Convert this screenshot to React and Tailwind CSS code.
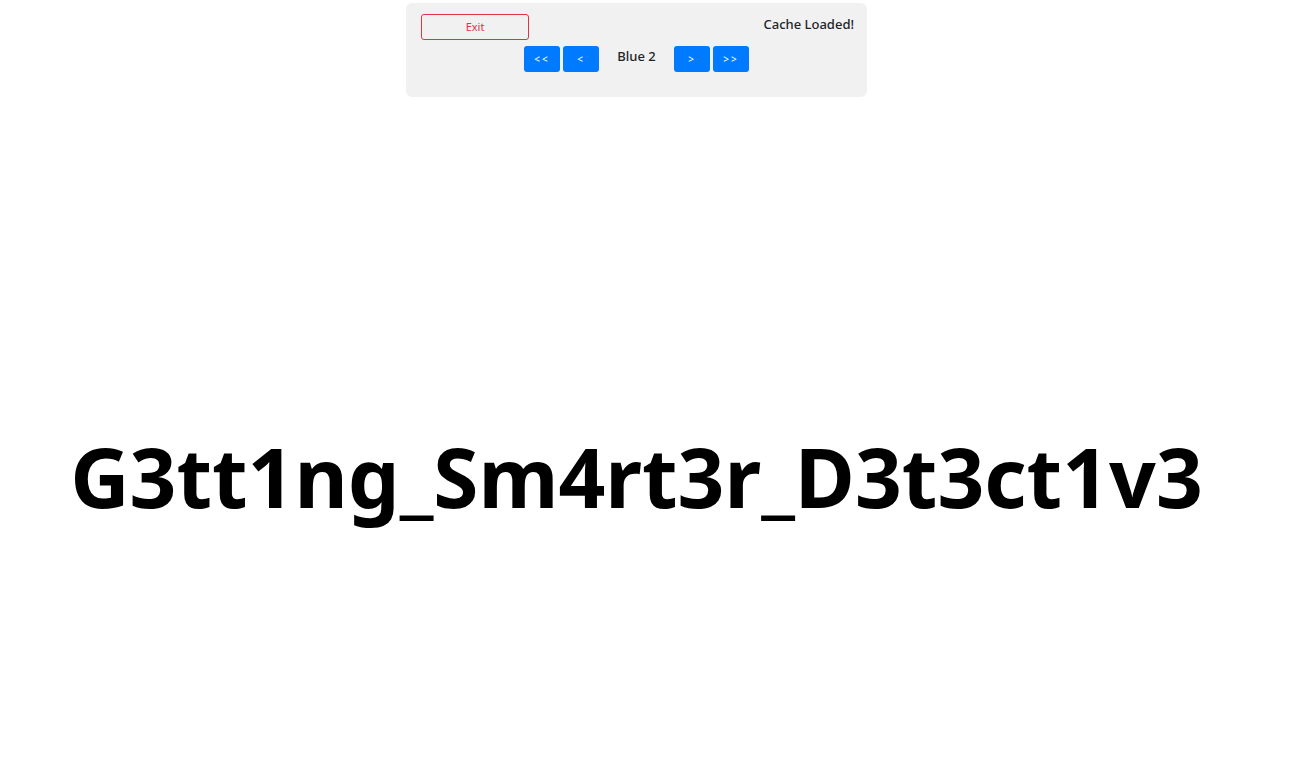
export default function App() {
    const navBtn = 'w-9 h-[26px] rounded-[3px] bg-[#007bff] text-white text-[10px] tracking-[2px] flex items-center justify-center';

    return (
        <div className="w-[1273px] min-h-[767px] bg-white font-['Noto_Sans',sans-serif] flex flex-col items-center">
            <div className="mt-[3px] w-[461px] h-[94px] bg-[#f1f1f1] rounded-md px-[15px] pt-[11px] flex flex-col">
                <div className="flex items-start justify-between">
                    <button className="w-[108px] h-[26px] border border-[#dc3545] rounded-[3px] text-[#dc3545] text-[11px] flex items-center justify-center">
                        Exit
                    </button>
                    <span className="text-[13px] font-medium text-[#212529] mr-[-2px] leading-[26px] -mt-[3px]">
                        Cache Loaded!
                    </span>
                </div>
                <div className="flex items-center justify-center mt-[6px] gap-[3px]">
                    <button className={navBtn}>&lt;&lt;</button>
                    <button className={navBtn}>&lt;</button>
                    <span className="w-[69px] text-center text-[13px] font-medium text-[#212529] -mt-[4px]">Blue 2</span>
                    <button className={navBtn}>&gt;</button>
                    <button className={navBtn}>&gt;&gt;</button>
                </div>
            </div>
            <h1 className="mt-[338px] text-[82px] font-bold text-black leading-none whitespace-nowrap">
                G3tt1ng_Sm4rt3r_D3t3ct1v3
            </h1>
        </div>
    );
}
